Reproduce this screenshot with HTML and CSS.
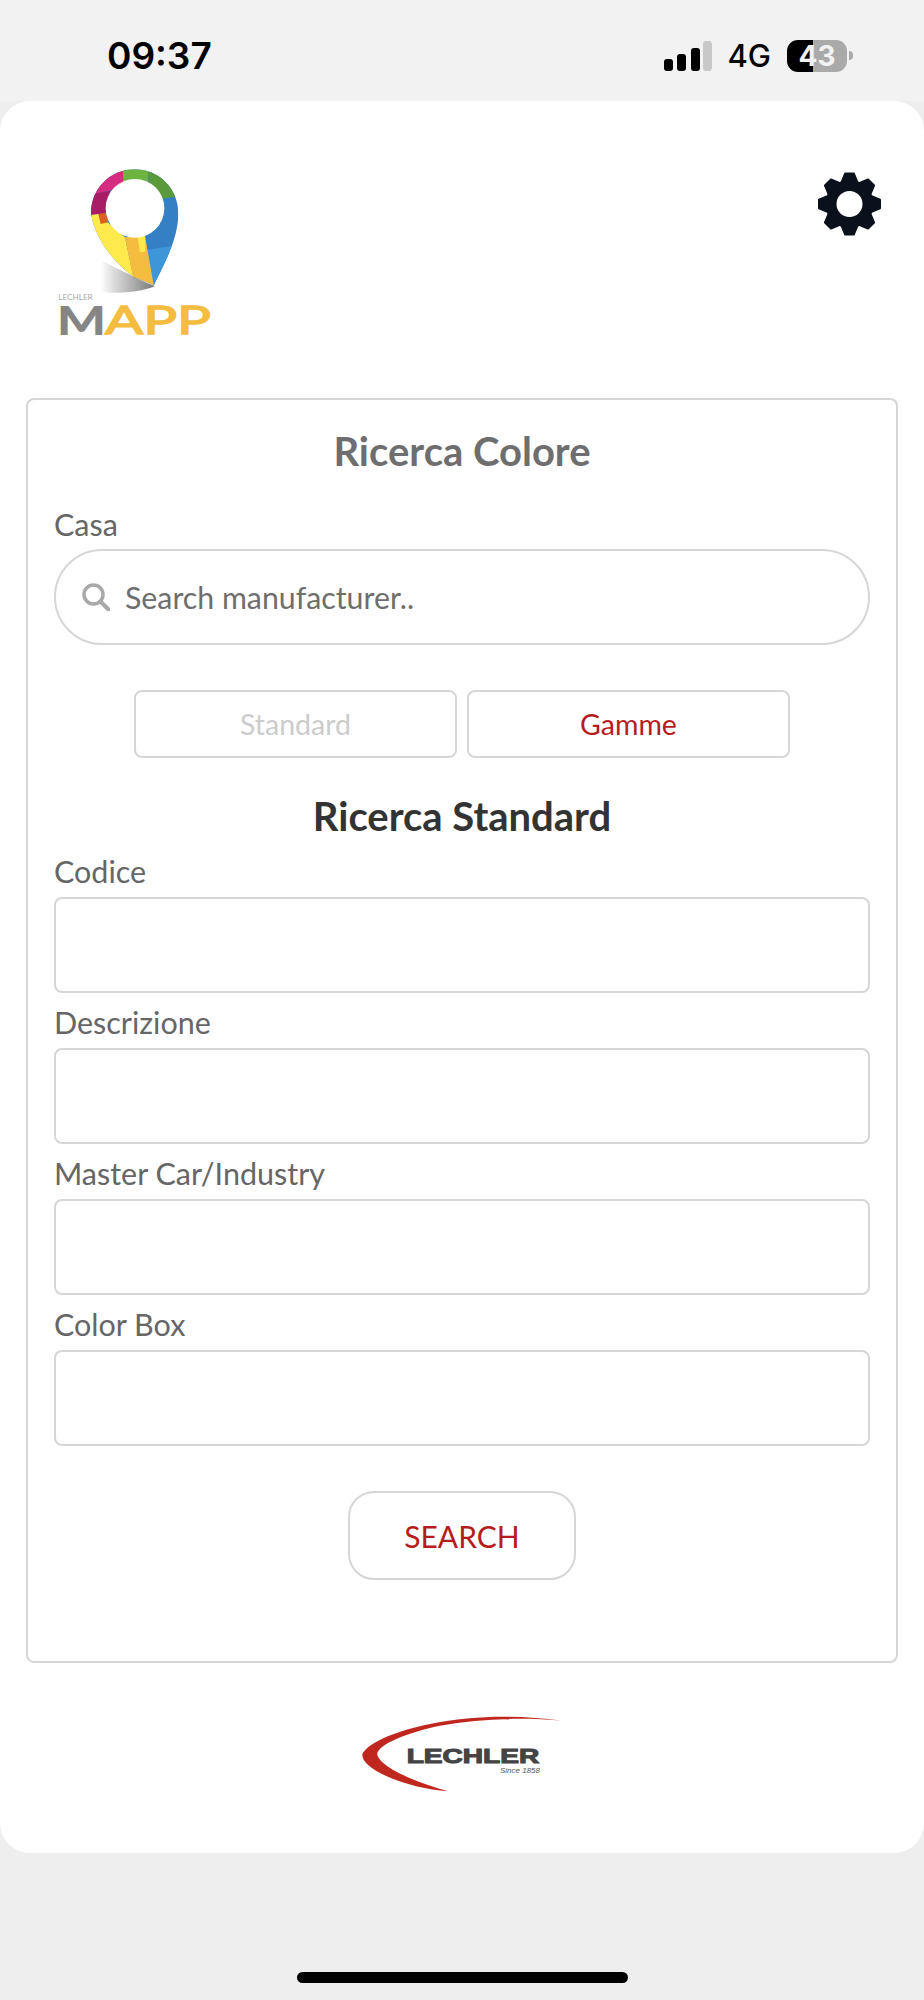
FILE: index.html
```html
<!DOCTYPE html>
<html lang="it">
<head>
<meta charset="utf-8">
<title>Ricerca Colore</title>
<link rel="stylesheet" href="styles.css">
</head>
<body>
<header class="status">
  <span class="time">09:37</span>
  <div class="status-right">
    <svg class="signal" width="48" height="30" viewBox="0 0 48 30">
      <rect x="0" y="18" width="9" height="12" rx="3" fill="#000"/>
      <rect x="13" y="13" width="9" height="17" rx="3" fill="#000"/>
      <rect x="27" y="7" width="9" height="23" rx="3" fill="#000"/>
      <rect x="39" y="0" width="9" height="30" rx="3" fill="#c8c8c8"/>
    </svg>
    <span class="net">4G</span>
    <div class="battery-wrap">
      <div class="battery">43</div>
      <span class="nub"></span>
    </div>
  </div>
</header>

<main class="sheet">
  <div class="top">
    <svg class="logo" width="190" height="200" viewBox="0 0 570 600">
      <defs>
        <clipPath id="pin"><path d="M153 190C153 115 212 58 284 58C356 58 415 115 415 190C415 270 370 345 342 405L280 380C225 340 165 270 153 190Z"/></clipPath>
        <linearGradient id="shade" x1="0" x2="1" y1="0" y2="0">
          <stop offset="0" stop-color="#fff"/>
          <stop offset="1" stop-color="#777"/>
        </linearGradient>
      </defs>
      <path d="M180 330C215 345 285 385 345 408C300 428 230 432 180 425Z" fill="url(#shade)"/>
      <g clip-path="url(#pin)">
        <rect x="140" y="50" width="290" height="370" fill="#3580c4"/>
        <polygon points="140,50 250,50 250,100 210,122 140,135" fill="#d62d82"/>
        <polygon points="140,135 210,122 200,190 140,197" fill="#a81d66"/>
        <polygon points="248,50 325,50 325,100 250,100" fill="#6db33f"/>
        <polygon points="325,50 430,50 430,137 340,150 325,100" fill="#5a9a3a"/>
        <polygon points="320,300 430,282 430,420 342,420" fill="#3d96d8"/>
        <polygon points="140,197 175,192 255,262 282,390 140,420" fill="#feea4c"/>
        <polygon points="175,192 198,188 205,217 182,222" fill="#d9601f"/>
        <polygon points="255,262 315,258 342,410 280,385" fill="#f4bd3f"/>
        <polygon points="293,262 315,258 316,305 300,307" fill="#feea4c"/>
      </g>
      <circle cx="285" cy="175" r="88" fill="#fff"/>
      <text class="logo-small" x="55" y="451" textLength="103" lengthAdjust="spacingAndGlyphs">LECHLER</text>
      <text class="logo-m" x="50" y="555" textLength="148" lengthAdjust="spacingAndGlyphs">M</text>
      <text class="logo-app" x="195" y="553" textLength="318" lengthAdjust="spacingAndGlyphs">APP</text>
    </svg>
    <svg class="gear" width="65" height="64" viewBox="-32.500 -32 65 64">
      <defs>
        <polygon id="tooth" points="-8,-21.500 -4.300,-30.500 4.300,-30.500 8,-21.500" fill="#0b111c" stroke="#0b111c" stroke-width="2" stroke-linejoin="round"/>
      </defs>
      <circle r="24" fill="#0b111c"/>
      <use href="#tooth"/>
      <use href="#tooth" transform="rotate(45)"/>
      <use href="#tooth" transform="rotate(90)"/>
      <use href="#tooth" transform="rotate(135)"/>
      <use href="#tooth" transform="rotate(180)"/>
      <use href="#tooth" transform="rotate(225)"/>
      <use href="#tooth" transform="rotate(270)"/>
      <use href="#tooth" transform="rotate(315)"/>
      <circle r="13" fill="#fff"/>
    </svg>
  </div>

  <section class="card">
    <h1 class="title">Ricerca Colore</h1>
    <label class="label label-casa" for="casa">Casa</label>
    <div class="search">
      <svg class="search-icon" width="28" height="28" viewBox="0 0 28 28">
        <circle cx="11.500" cy="11.500" r="9.500" fill="none" stroke="#a9a9a9" stroke-width="3.500"/>
        <path d="M18.500 18.500L26.500 26.500" stroke="#a9a9a9" stroke-width="4" stroke-linecap="round"/>
      </svg>
      <input id="casa" class="search-input" type="text" placeholder="Search manufacturer..">
    </div>
    <div class="tabs">
      <button class="tab tab-off" type="button">Standard</button>
      <button class="tab tab-on" type="button">Gamme</button>
    </div>
    <h2 class="subtitle">Ricerca Standard</h2>
    <div class="fields">
      <div class="field"><label class="label" for="f1">Codice</label><input id="f1" class="input" type="text"></div>
      <div class="field"><label class="label" for="f2">Descrizione</label><input id="f2" class="input" type="text"></div>
      <div class="field"><label class="label" for="f3">Master Car/Industry</label><input id="f3" class="input" type="text"></div>
      <div class="field"><label class="label" for="f4">Color Box</label><input id="f4" class="input" type="text"></div>
    </div>
    <button class="submit" type="button">SEARCH</button>
  </section>

  <footer class="foot">
    <svg width="240" height="110" viewBox="6 0 720 330">
      <path d="M665 62C540 45 400 45 270 72C170 92 90 125 68 160C55 200 180 262 325 274C235 250 125 205 112 165C108 135 200 98 300 77C420 55 550 52 665 62Z" fill="#c0281f"/>
      <text class="lech" x="200" y="188" textLength="398" lengthAdjust="spacingAndGlyphs">LECHLER</text>
      <text class="since" x="480" y="219" textLength="120" lengthAdjust="spacingAndGlyphs">Since 1858</text>
    </svg>
  </footer>
</main>

<div class="home"><span class="home-bar"></span></div>
</body>
</html>
```

FILE: styles.css
```css
* { box-sizing: border-box; }
html, body { margin: 0; padding: 0; }
body {
  width: 924px;
  height: 2000px;
  background: #eeeeee;
  font-family: Lato, "Open Sans", sans-serif;
  display: flex;
  flex-direction: column;
  overflow: hidden;
}

.status {
  height: 101px;
  background: #f2f2f2;
  display: flex;
  justify-content: space-between;
  align-items: center;
  padding: 0 71px 0 107px;
}
.time {
  font-family: Inter, sans-serif;
  font-weight: 600;
  font-size: 37px;
  color: #000;
  margin-top: 10px;
}
.status-right {
  display: flex;
  align-items: center;
  margin-top: 10px;
}
.signal { margin-right: 15px; }
.net {
  font-family: Inter, sans-serif;
  font-weight: 500;
  font-size: 31px;
  color: #000;
  margin-right: 16px;
}
.battery-wrap { display: flex; align-items: center; gap: 2px; }
.battery {
  width: 60px;
  height: 32px;
  border-radius: 11px;
  background: linear-gradient(90deg, #000 0 26px, #aaaaaa 26px 100%);
  color: #f2f2f2;
  font-family: Inter, sans-serif;
  font-weight: 700;
  font-size: 28px;
  line-height: 32px;
  text-align: center;
}
.nub {
  width: 4px;
  height: 9px;
  background: #aaaaaa;
  border-radius: 0 4px 4px 0;
}

.sheet {
  height: 1752px;
  background: #fff;
  border-radius: 30px;
  display: flex;
  flex-direction: column;
}
.top {
  height: 297px;
  display: flex;
  justify-content: space-between;
  align-items: flex-start;
  padding: 49px 42px 0 40px;
}
.logo { display: block; }
.gear { display: block; margin-top: 22px; }
.logo-small { font-family: Lato, sans-serif; font-size: 24px; fill: #a8a8a8; }
.logo-m { font-family: Lato, sans-serif; font-weight: 900; font-size: 122px; fill: #858585; }
.logo-app { font-family: Lato, sans-serif; font-weight: 400; font-size: 116px; fill: #f4bd3f; stroke: #f4bd3f; stroke-width: 4px; }

.card {
  margin: 0 26px;
  height: 1265px;
  border: 2px solid #d6d6d6;
  border-radius: 8px;
  padding: 29px 26px 0;
  display: flex;
  flex-direction: column;
}
.title {
  margin: 0;
  font-size: 40px;
  line-height: 44px;
  font-weight: 700;
  color: #6e6e6e;
  text-align: center;
}
.label {
  display: block;
  font-size: 30.500px;
  line-height: 30px;
  color: #666;
}
.label-casa { margin-top: 36px; }
.search {
  margin-top: 10px;
  height: 96px;
  border: 2px solid #d6d6d6;
  border-radius: 48px;
  display: flex;
  align-items: center;
  padding-left: 26px;
  gap: 15px;
}
.search-icon { flex: none; }
.search-input {
  flex: 1;
  min-width: 0;
  border: 0;
  outline: 0;
  padding: 0;
  margin: 0;
  background: transparent;
  font-family: Lato, sans-serif;
  font-size: 30.300px;
  color: #666;
}
.search-input::placeholder { color: #6e6e6e; opacity: 1; }
.tabs {
  margin-top: 45px;
  display: flex;
  justify-content: center;
  gap: 10px;
}
.tab {
  width: 323px;
  height: 68px;
  background: #fff;
  border: 2px solid #d6d6d6;
  border-radius: 8px;
  font-family: Lato, sans-serif;
  font-size: 28.500px;
  padding: 0;
}
.tab-off { color: #cccccc; }
.tab-on { color: #b71c1c; }
.subtitle {
  margin: 36px 0 0;
  font-size: 40px;
  line-height: 44px;
  font-weight: 700;
  color: #333;
  text-align: center;
}
.fields {
  margin-top: 18px;
  display: flex;
  flex-direction: column;
  gap: 14px;
}
.field { display: flex; flex-direction: column; gap: 11px; }
.input {
  height: 96px;
  width: 100%;
  border: 2px solid #d6d6d6;
  border-radius: 8px;
  background: #fff;
  outline: 0;
  padding: 0 12px;
  font-family: Lato, sans-serif;
  font-size: 28px;
}
.submit {
  align-self: center;
  margin-top: 45px;
  width: 228px;
  height: 89px;
  background: #fff;
  border: 2px solid #d6d6d6;
  border-radius: 26px;
  font-family: Lato, sans-serif;
  font-size: 30px;
  color: #b71c1c;
  padding: 0;
}

.foot {
  margin-top: 37px;
  display: flex;
  justify-content: center;
}
.foot svg { display: block; }
.lech { font-family: "Liberation Sans", sans-serif; font-weight: 700; font-size: 58px; fill: #444; stroke: #444; stroke-width: 3px; }
.since { font-family: "Liberation Sans", sans-serif; font-style: italic; font-size: 20px; fill: #555; }

.home {
  flex: 1;
  display: flex;
  justify-content: center;
  padding-top: 119px;
}
.home-bar {
  width: 331px;
  height: 11px;
  border-radius: 6px;
  background: #000;
}
```
